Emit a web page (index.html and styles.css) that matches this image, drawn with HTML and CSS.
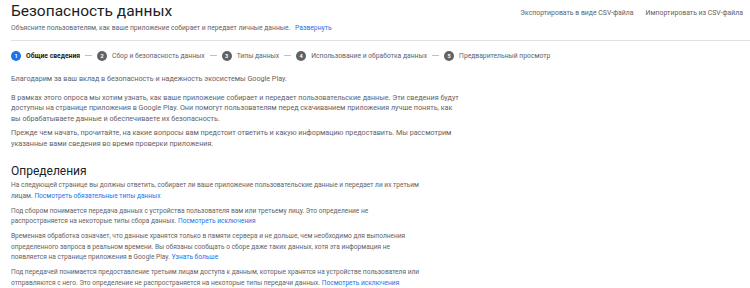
FILE: index.html
```html
<!DOCTYPE html>
<html lang="ru">
<head>
  <meta charset="UTF-8" />
  <meta name="viewport" content="width=device-width, initial-scale=1.0"/>
  <title>Безопасность данных</title>
  <link rel="stylesheet" href="styles.css">
</head>
<body>
  <div class="header">
    <div class="title-block">
      <h1>Безопасность данных</h1>
      <div class="subtitle">Объясните пользователям, как ваше приложение собирает и передает личные данные. <a href="#">Развернуть</a></div>
    </div>
    <div class="actions">
      <a href="#" class="action">Экспортировать в виде CSV-файла</a>
      <a href="#" class="action">Импортировать из CSV-файла</a>
    </div>
  </div>

  <div class="stepper">
    <div class="step active"><span class="num">1</span><span class="label">Общие сведения</span></div>
    <span class="sep"></span>
    <div class="step"><span class="num">2</span><span class="label">Сбор и безопасность данных</span></div>
    <span class="sep"></span>
    <div class="step"><span class="num">3</span><span class="label">Типы данных</span></div>
    <span class="sep"></span>
    <div class="step"><span class="num">4</span><span class="label">Использование и обработка данных</span></div>
    <span class="sep"></span>
    <div class="step"><span class="num">5</span><span class="label">Предварительный просмотр</span></div>
  </div>

  <div class="content">
    <div class="intro">
      <p class="lead">Благодарим за ваш вклад в безопасность и надежность экосистемы Google Play.</p>
      <p>В рамках этого опроса мы хотим узнать, как ваше приложение собирает и передает пользовательские данные. Эти сведения будут<br>доступны на странице приложения в Google Play. Они помогут пользователям перед скачиванием приложения лучше понять, как<br>вы обрабатываете данные и обеспечиваете их безопасность.</p>
      <p>Прежде чем начать, прочитайте, на какие вопросы вам предстоит ответить и какую информацию предоставить. Мы рассмотрим<br>указанные вами сведения во время проверки приложения.</p>
    </div>

    <h2>Определения</h2>
    <div class="defs">
      <p>На следующей странице вы должны ответить, собирает ли ваше приложение пользовательские данные и передает ли их третьим<br>лицам. <a href="#">Посмотреть обязательные типы данных</a></p>
      <p>Под сбором понимается передача данных с устройства пользователя вам или третьему лицу. Это определение не<br>распространяется на некоторые типы сбора данных. <a href="#">Посмотреть исключения</a></p>
      <p>Временная обработка означает, что данные хранятся только в памяти сервера и не дольше, чем необходимо для выполнения<br>определенного запроса в реальном времени. Вы обязаны сообщать о сборе даже таких данных, хотя эта информация не<br>появляется на странице приложения в Google Play. <a href="#">Узнать больше</a></p>
      <p>Под передачей понимается предоставление третьим лицам доступа к данным, которые хранятся на устройстве пользователя или<br>отправляются с него. Это определение не распространяется на некоторые типы передачи данных. <a href="#">Посмотреть исключения</a></p>
    </div>
  </div>
</body>
</html>
```

FILE: styles.css
```css
body {
  margin: 0;
  font-family: Roboto, "Liberation Sans", sans-serif;
  background: #fff;
  color: #5f6368;
  overflow: hidden;
}

a {
  color: #1a73e8;
  text-decoration: none;
}

.header {
  display: flex;
  justify-content: space-between;
  height: 40px;
  padding: 2px 7px 0 11px;
  box-sizing: border-box;
}

h1 {
  margin: 0;
  font-size: 15.5px;
  line-height: 18px;
  font-weight: 400;
  color: #202124;
}

.subtitle {
  margin-top: 3px;
  font-size: 6.75px;
  line-height: 10px;
}

.subtitle a {
  margin-left: 3px;
}

.actions {
  display: flex;
  gap: 12px;
  padding-top: 6px;
}

.action {
  color: #5f6368;
  font-size: 6.9px;
  line-height: 10px;
}

.stepper {
  display: flex;
  align-items: center;
  margin-left: 11px;
  height: 29px;
  border-top: 1px solid #e0e0e0;
}

.step {
  display: flex;
  align-items: center;
  gap: 5px;
}

.num {
  width: 10px;
  height: 10px;
  border-radius: 50%;
  background: #5f6368;
  color: #fff;
  font-size: 5.5px;
  font-weight: 700;
  display: flex;
  align-items: center;
  justify-content: center;
}

.step.active .num {
  background: #1a73e8;
}

.label {
  font-size: 6.75px;
  color: #5f6368;
}

.step.active .label {
  color: #202124;
  font-weight: 700;
}

.sep {
  width: 7px;
  height: 1px;
  background: #bdc1c6;
  margin: 0 5px;
}

.content {
  padding: 4px 11px 0;
}

p {
  margin: 0 0 4px;
  font-size: 7.2px;
  line-height: 10.5px;
}

p.lead {
  margin-bottom: 8px;
}

h2 {
  margin: 14px 0 1px;
  font-size: 12px;
  line-height: 16px;
  font-weight: 400;
  color: #202124;
}

.defs p {
  font-size: 6.6px;
  margin-bottom: 4.5px;
}
```
